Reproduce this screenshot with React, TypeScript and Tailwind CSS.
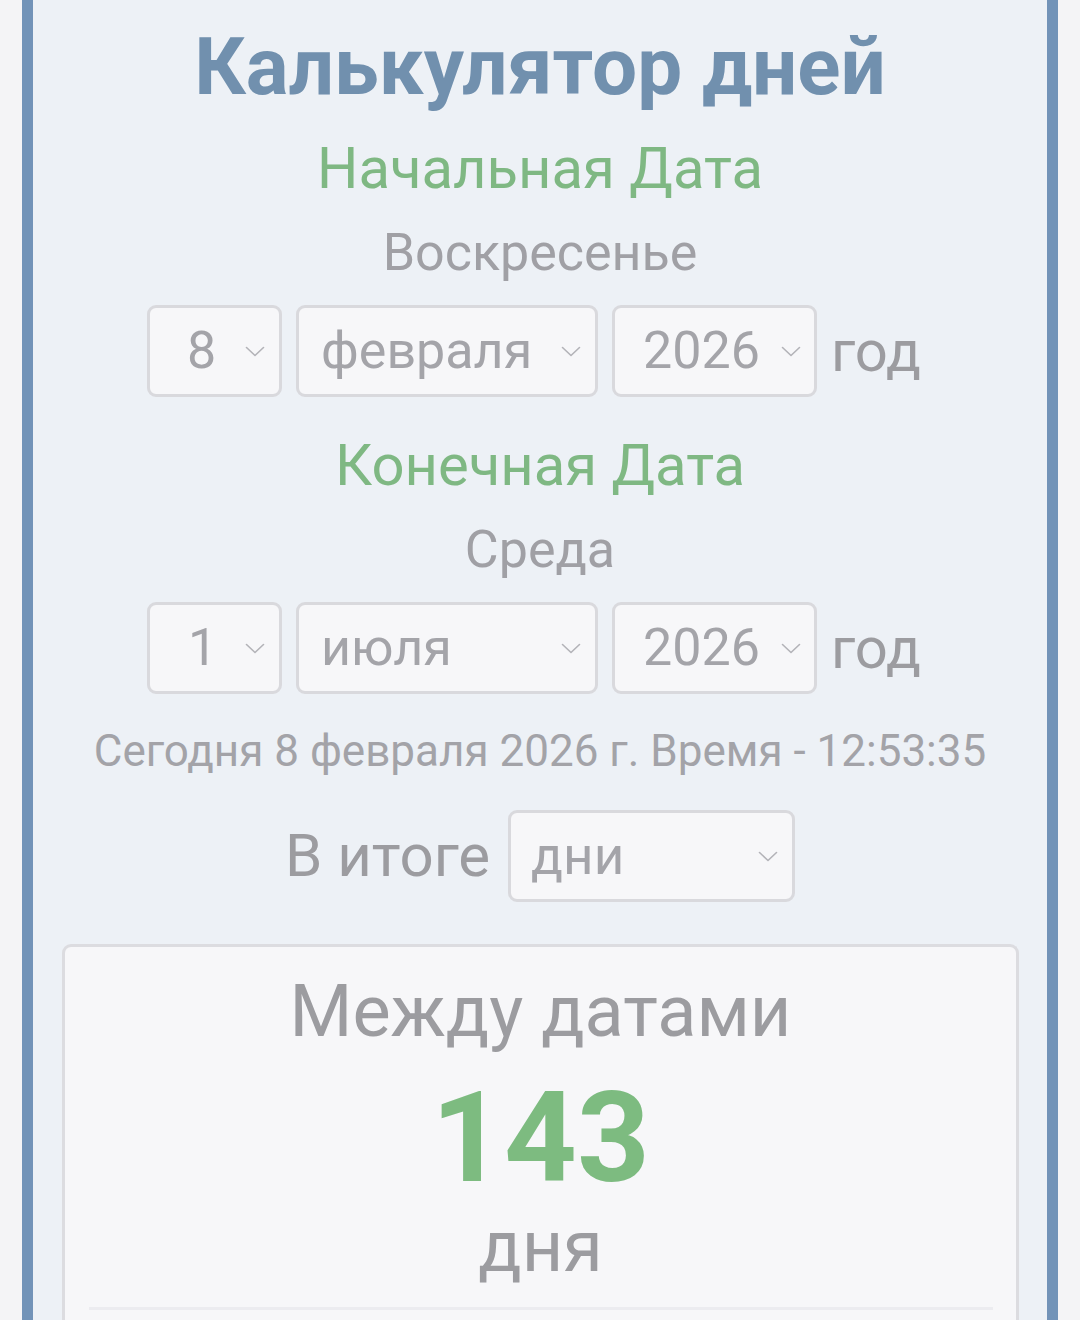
import React from "react";

const Chevron = () => (
  <svg width="20" height="11" viewBox="0 0 20 11" fill="none" className="shrink-0">
    <path d="M1.5 1.5 L10 9.5 L18.5 1.5" stroke="#b3b3b8" strokeWidth="1.6" strokeLinecap="round" strokeLinejoin="round" />
  </svg>
);

function Sel({ w, pl, pr, text }: { w: string; pl: string; pr: string; text: string }) {
  return (
    <div
      className={`flex h-[92px] items-center justify-between rounded-[9px] border-[3px] border-[#d9d9dd] bg-[#f7f7f9] text-[52px] text-[#a4a4a9] ${w} ${pl} ${pr}`}
    >
      <span className="leading-none">{text}</span>
      <Chevron />
    </div>
  );
}

export default function App() {
  return (
    <div
      className="h-[1320px] w-[1080px] overflow-hidden bg-[#f4f4f6]"
      style={{ fontFamily: "Roboto, 'Noto Sans', sans-serif" }}
    >
      <div className="ml-[22px] flex h-[1320px] w-[1036px] flex-col items-center border-x-[11px] border-[#7293b8] bg-[#edf1f6]">
        <div className="pt-[17px] text-[80px] font-bold leading-[100px] text-[#7190ae]">Калькулятор дней</div>
        <div className="mt-[16px] text-[58px] leading-[70px] text-[#7fb883]">Начальная Дата</div>
        <div className="mt-[18px] text-[52px] leading-[64px] text-[#a0a0a5]">Воскресенье</div>
        <div className="mt-[20px] flex items-center gap-[14px] pr-[12px]">
          <Sel w="w-[135px]" pl="pl-[37px]" pr="pr-[14px]" text="8" />
          <Sel w="w-[302px]" pl="pl-[22px]" pr="pr-[14px]" text="февраля" />
          <Sel w="w-[205px]" pl="pl-[28px]" pr="pr-[13px]" text="2026" />
          <span className="text-[58px] leading-none text-[#9c9ca0]">год</span>
        </div>
        <div className="mt-[33px] text-[58px] leading-[70px] text-[#7fb883]">Конечная Дата</div>
        <div className="mt-[18px] text-[52px] leading-[64px] text-[#a0a0a5]">Среда</div>
        <div className="mt-[20px] flex items-center gap-[14px] pr-[12px]">
          <Sel w="w-[135px]" pl="pl-[38px]" pr="pr-[14px]" text="1" />
          <Sel w="w-[302px]" pl="pl-[22px]" pr="pr-[14px]" text="июля" />
          <Sel w="w-[205px]" pl="pl-[28px]" pr="pr-[13px]" text="2026" />
          <span className="text-[58px] leading-none text-[#9c9ca0]">год</span>
        </div>
        <div className="mt-[29px] text-[44px] leading-[56px] text-[#a3a3a8]">
          Сегодня 8 февраля 2026 г. Время - 12:53:35
        </div>
        <div className="mt-[31px] flex items-center gap-[18px]">
          <span className="text-[60px] leading-none text-[#9c9ca0]">В итоге</span>
          <div className="flex h-[92px] w-[287px] items-center justify-between rounded-[9px] border-[3px] border-[#d9d9dd] bg-[#f7f7f9] pl-[20px] pr-[14px] text-[53px] text-[#a4a4a9]">
            <span className="leading-none">дни</span>
            <Chevron />
          </div>
        </div>
        <div className="mt-[42px] flex w-[957px] flex-1 flex-col items-center self-start ml-[29px] rounded-t-[9px] border-x-[3px] border-t-[3px] border-[#dcdce0] bg-[#f7f7f9]">
          <div className="mt-[25px] text-[72px] leading-[80px] text-[#9c9ca0]">Между датами</div>
          <div className="mt-[21px] text-[127px] font-bold leading-[130px] text-[#7dbb80]">143</div>
          <div className="mt-[4px] text-[72px] leading-[80px] text-[#9c9ca0]">дня</div>
          <div className="mt-[20px] h-[3px] w-[904px] bg-[#ececf0]" />
        </div>
      </div>
    </div>
  );
}
